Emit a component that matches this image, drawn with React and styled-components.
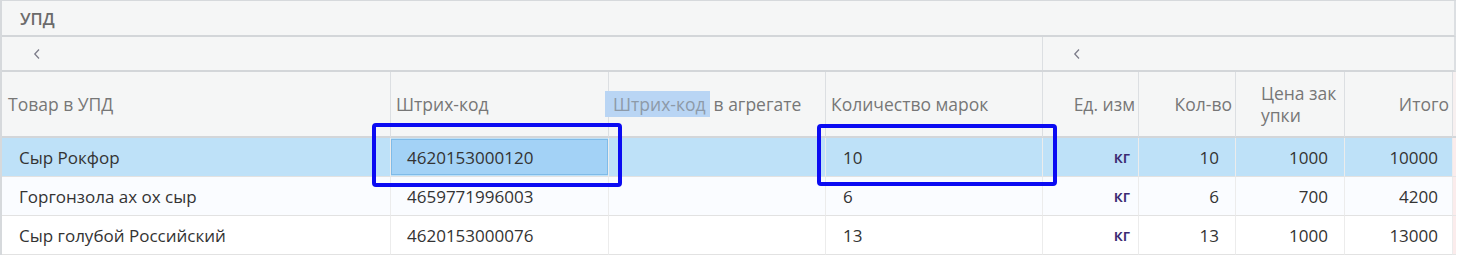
import React from 'react'
import styled, { createGlobalStyle } from 'styled-components'

const Global = createGlobalStyle`
  body {
    margin: 0;
    background: #fff;
    font-family: "Open Sans", "Liberation Sans", sans-serif;
  }
`

const columns = [
  { key: 'name', title: 'Товар в УПД', width: 389, align: 'left', pad: 6, dataPad: 17 },
  { key: 'code', title: 'Штрих-код', width: 218, align: 'left', pad: 5, dataPad: 16 },
  { key: 'agg', title: 'Штрих-код в агрегате', width: 217, align: 'left', pad: 4, dataPad: 16 },
  { key: 'marks', title: 'Количество марок', width: 217, align: 'left', pad: 5, dataPad: 17 },
  { key: 'unit', title: 'Ед. изм', width: 96, align: 'right', pad: 4, dataPad: 8 },
  { key: 'qty', title: 'Кол-во', width: 97, align: 'right', pad: 4, dataPad: 16 },
  { key: 'price', title: 'Цена закупки', width: 109, align: 'left', pad: 25, dataPad: 16 },
  { key: 'total', title: 'Итого', width: 108, align: 'right', pad: 3, dataPad: 14 },
]

const rows = [
  { name: 'Сыр Рокфор', code: '4620153000120', agg: '', marks: '10', unit: 'кг', qty: '10', price: '1000', total: '10000' },
  { name: 'Горгонзола ах ох сыр', code: '4659771996003', agg: '', marks: '6', unit: 'кг', qty: '6', price: '700', total: '4200' },
  { name: 'Сыр голубой Российский', code: '4620153000076', agg: '', marks: '13', unit: 'кг', qty: '13', price: '1000', total: '13000' },
]

const template = columns.map((c) => `${c.width}px`).join(' ') + ' 1fr'

const Page = styled.div`
  position: relative;
  width: 1460px;
  height: 264px;
  overflow: hidden;
`

const Frame = styled.div`
  width: 1456px;
  border-left: 2px solid #d6d9dc;
  border-top: 1px solid #d6d9dc;
  box-sizing: border-box;
  background: #f5f6f6;
`

const TitleBar = styled.div`
  height: 34px;
  display: flex;
  align-items: center;
  padding-left: 18px;
  border-bottom: 2px solid #d3d6d9;
  border-right: 2px solid #dcdfe2;
  font-size: 16.5px;
  font-weight: 600;
  color: #6b6b6b;
`

const NavBar = styled.div`
  height: 33px;
  display: grid;
  grid-template-columns: 1041px 1fr;
  border-bottom: 2px solid #d3d6d9;
  border-right: 2px solid #dcdfe2;
`

const NavSection = styled.div`
  display: flex;
  align-items: center;
  padding-left: ${(p) => p.$pad}px;
  border-right: ${(p) => (p.$divider ? '1px solid #dcdfe2' : 'none')};
`

const Grid = styled.div`
  display: grid;
  grid-template-columns: ${template};
  background: #fff;
`

const HeadCell = styled.div`
  height: 66px;
  box-sizing: border-box;
  display: flex;
  align-items: center;
  justify-content: ${(p) => (p.$align === 'right' ? 'flex-end' : 'flex-start')};
  padding: 0 ${(p) => (p.$align === 'right' ? 3 : 0)}px 0 ${(p) => p.$pad}px;
  background: #f5f6f6;
  border-right: 1px solid #dcdfe2;
  border-bottom: 2px solid #d3d6d9;
  font-size: 17.5px;
  line-height: 22px;
  color: #777;
  white-space: nowrap;
  text-align: ${(p) => p.$align};
`

const Filler = styled.div`
  background: ${(p) => (p.$head ? '#f7f0f0' : '#fbecec')};
  border-bottom: ${(p) => (p.$head ? '2px solid #d3d6d9' : '1px solid #e6e6e6')};
`

const Selected = styled.span`
  background: #b9d5f4;
  color: #8d9aa8;
  margin-left: -8px;
  padding: 1px 4px 1px 8px;
  margin-right: 4px;
`

const Cell = styled.div`
  height: 39px;
  box-sizing: border-box;
  display: flex;
  align-items: center;
  justify-content: ${(p) => (p.$align === 'right' ? 'flex-end' : 'flex-start')};
  padding: 0 ${(p) => (p.$align === 'right' ? p.$pad : 0)}px 0 ${(p) => (p.$align === 'right' ? 0 : p.$pad)}px;
  background: ${(p) => p.$bg};
  border-right: 1px solid #ececec;
  border-bottom: 1px solid #e2e2e2;
  font-size: 17px;
  color: #333;
`

const Editor = styled.div`
  height: 36px;
  margin: 1px 0;
  box-sizing: border-box;
  display: flex;
  align-items: center;
  padding-left: 15px;
  background: #a3d2f6;
  border: 1px solid #7fbbe8;
  font-size: 17px;
  color: #333;
`

const EditCell = styled.div`
  background: #bee1f8;
  border-right: 1px solid #ececec;
  border-bottom: 1px solid #e2e2e2;
`

const Unit = styled.span`
  color: #3b2a72;
  font-weight: 600;
  font-size: 16px;
`

const Callout = styled.div`
  position: absolute;
  left: ${(p) => p.$x}px;
  top: ${(p) => p.$y}px;
  width: ${(p) => p.$w}px;
  height: ${(p) => p.$h}px;
  box-sizing: border-box;
  border: 4px solid #0b0bf2;
  border-radius: 4px;
  pointer-events: none;
`

const rowBg = ['#bee1f8', '#fafcff', '#ffffff']

const Chevron = () => (
  <svg width="8" height="12" viewBox="0 0 8 12">
    <path d="M6 1.5 L1.8 6 L6 10.5" fill="none" stroke="#7d7d8a" strokeWidth="1.3" />
  </svg>
)

const headTitle = (c) => {
  if (c.key === 'agg') return <span><Selected>Штрих-код</Selected>в агрегате</span>
  if (c.key === 'price') return <span>Цена зак<br />упки</span>
  return c.title
}

export default function App() {
  return (
    <Page>
      <Global />
      <Frame>
        <TitleBar>УПД</TitleBar>
        <NavBar>
          <NavSection $pad={31} $divider><Chevron /></NavSection>
          <NavSection $pad={30}><Chevron /></NavSection>
        </NavBar>
        <Grid>
          {columns.map((c) => (
            <HeadCell key={c.key} $align={c.align} $pad={c.pad}>{headTitle(c)}</HeadCell>
          ))}
          <Filler $head />
          {rows.map((r, i) => (
            <React.Fragment key={r.code}>
              {columns.map((c) => {
                if (i === 0 && c.key === 'code') {
                  return <EditCell key={c.key}><Editor>{r.code}</Editor></EditCell>
                }
                const align = c.key === 'name' || c.key === 'code' || c.key === 'agg' || c.key === 'marks' ? 'left' : 'right'
                return (
                  <Cell key={c.key} $align={align} $pad={c.dataPad} $bg={rowBg[i]}>
                    {c.key === 'unit' ? <Unit>{r.unit}</Unit> : r[c.key]}
                  </Cell>
                )
              })}
              <Filler />
            </React.Fragment>
          ))}
        </Grid>
      </Frame>
      <Callout $x={372} $y={123} $w={250} $h={64} />
      <Callout $x={817} $y={124} $w={240} $h={62} />
    </Page>
  )
}
